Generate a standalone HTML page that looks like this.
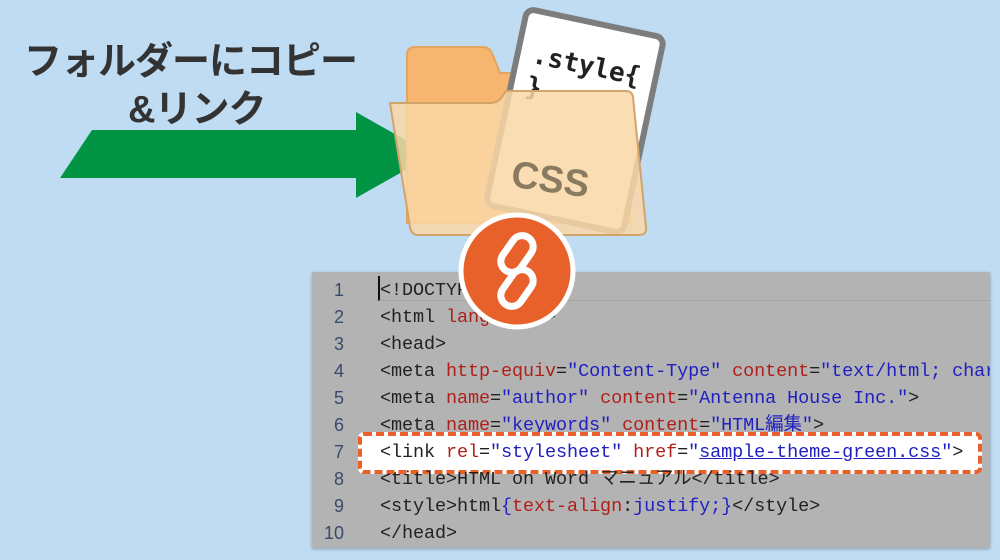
<!DOCTYPE html>
<html><head><meta charset="utf-8"><style>
body{margin:0;width:1000px;height:560px;overflow:hidden;background:#bfdcf3;position:relative;font-family:"Liberation Sans","Noto Sans CJK JP",sans-serif}
.t{position:absolute;color:#333;font-size:38px;font-weight:bold;white-space:nowrap;letter-spacing:-1px}
.panel{position:absolute;left:312px;top:272px;width:678px;height:276px;background:#b3b3b3;box-shadow:0 1px 3px rgba(0,0,0,.3);overflow:hidden}
.ln{position:absolute;left:0;width:32px;text-align:right;color:#3a4a6a;font-size:18px;line-height:24px;margin-top:2px}
.code{position:absolute;left:68px;white-space:nowrap;font-family:"Liberation Mono","Noto Sans CJK JP",monospace;font-size:18.5px;line-height:24px;color:#222;letter-spacing:-0.1px;margin-top:3px}
.r{color:#b0201a}.b{color:#2020c0}
.hl{position:absolute;left:46px;top:160px;width:616px;height:34px;background:#fff;border:4px dashed #e8602a;border-radius:6px}
</style></head><body>
<div class="t" style="left:24px;top:30px">フォルダーにコピー</div>
<div class="t" style="left:128px;top:78px">&amp;リンク</div>
<svg style="position:absolute;left:0;top:0" width="1000" height="560">
<polygon points="60,178 92,130 356,130 356,112 432,155 356,198 356,178" fill="#009444"/>
<path d="M407,55 q0,-8 8,-8 h68 q6,0 9,6 l8,20 h130 v150 h-223z" fill="#f6b66f" stroke="#e3a560" stroke-width="2"/>
<g transform="rotate(12 570 120)">
<rect x="505" y="20" width="140" height="200" rx="8" fill="#fff" stroke="#7d7d7d" stroke-width="6"/>
<text x="520" y="72" font-family="DejaVu Sans Mono,monospace" font-weight="bold" font-size="26" fill="#222">.style{</text>
<text x="520" y="104" font-family="DejaVu Sans Mono,monospace" font-weight="bold" font-size="26" fill="#222">}</text>
</g>
<path d="M390,103 h100 q8,0 12,-6 l4,-6 h120 q6,0 7,6 l13,130 q1,8 -7,8 h-220 q-8,0 -9,-8z" fill="#f9d7a6" fill-opacity=".85" stroke="#d1a46a" stroke-width="2"/>
<text x="512" y="192" transform="rotate(8 550 175)" font-family="Liberation Sans,sans-serif" font-weight="bold" font-size="38" fill="#8a7a60">CSS</text>
</svg>
<div class="panel">
<div class="ln" style="top:4px">1</div><div class="ln" style="top:31px">2</div><div class="ln" style="top:58px">3</div><div class="ln" style="top:85px">4</div><div class="ln" style="top:112px">5</div><div class="ln" style="top:139px">6</div><div class="ln" style="top:166px">7</div><div class="ln" style="top:193px">8</div><div class="ln" style="top:220px">9</div><div class="ln" style="top:247px">10</div>
<div style="position:absolute;left:66px;top:4px;width:612px;height:24px;border-bottom:1px solid #a5a5a5;border-left:2px solid #111"></div>
<div class="code" style="top:4px">&lt;!DOCTYPE</div>
<div class="code" style="top:31px">&lt;html <span class="r">lang</span>="ja"&gt;</div>
<div class="code" style="top:58px">&lt;head&gt;</div>
<div class="code" style="top:85px">&lt;meta <span class="r">http-equiv</span>=<span class="b">"Content-Type"</span> <span class="r">content</span>=<span class="b">"text/html; charset=utf-8"</span></div>
<div class="code" style="top:112px">&lt;meta <span class="r">name</span>=<span class="b">"author"</span> <span class="r">content</span>=<span class="b">"Antenna House Inc."</span>&gt;</div>
<div class="code" style="top:139px">&lt;meta <span class="r">name</span>=<span class="b">"keywords"</span> <span class="r">content</span>=<span class="b">"HTML編集"</span>&gt;</div>
<div class="hl"></div>
<div class="code" style="top:166px">&lt;link <span class="r">rel</span>=<span class="b">"stylesheet"</span> <span class="r">href</span>=<span class="b">"<u>sample-theme-green.css</u>"</span>&gt;</div>
<div class="code" style="top:193px">&lt;title&gt;HTML on Word マニュアル&lt;/title&gt;</div>
<div class="code" style="top:220px">&lt;style&gt;html<span class="b">{</span><span class="r">text-align</span>:<span class="b">justify;}</span>&lt;/style&gt;</div>
<div class="code" style="top:247px">&lt;/head&gt;</div>
</div>
<svg style="position:absolute;left:458px;top:212px" width="118" height="118">
<circle cx="59" cy="59" r="56" fill="#e8602a" stroke="#fff" stroke-width="5"/>
<g fill="none" stroke="#fff" stroke-width="7" stroke-linecap="round">
<rect x="48" y="22" width="22" height="40" rx="11" transform="rotate(35 59 42)"/>
<rect x="48" y="56" width="22" height="40" rx="11" transform="rotate(35 59 76)"/>
</g>
</svg>
</body></html>
